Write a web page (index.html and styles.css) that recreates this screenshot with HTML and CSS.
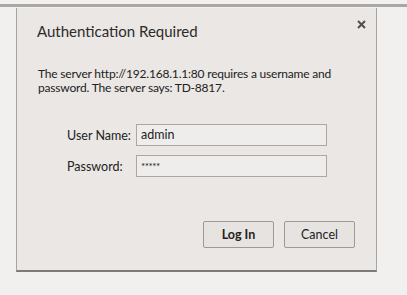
FILE: index.html
```html
<!DOCTYPE html>
<html>
<head>
  <meta charset='UTF-8'>
  <title>Authentication Required</title>
  <link rel="stylesheet" href="styles.css">
</head>
<body>
  <div class='top'></div>
  <div class='dlg'>
    <div class='hd'>
      <h1>Authentication Required</h1>
      <svg class='x' width='9' height='9' viewBox='0 0 9 9'><path d='M1 1L8 8M8 1L1 8' stroke='#505050' stroke-width='2'/></svg>
    </div>
    <p class='msg'>The server http://192.168.1.1:80 requires a username and password. The server says: TD-8817.</p>
    <div class='frm'>
      <div class='row'><label>User Name:</label><div class='in'>admin</div></div>
      <div class='row'><label>Password:</label><div class='in pw'>*****</div></div>
    </div>
    <div class='btns'>
      <button class='b pri'>Log In</button>
      <button class='b'>Cancel</button>
    </div>
  </div>
</body>
</html>
```

FILE: styles.css
```css
html,body{margin:0;height:100%;}
body{background:#f1f0ee;font-family:Lato,sans-serif;color:#222;overflow:hidden;}
.top{height:4px;border-bottom:3px solid #a9a8a6;background:#f2f1ef;}
.dlg{margin-left:16px;width:359px;height:262px;margin-top:1px;background:#eae7e4;border:1px solid #a7a5a3;border-bottom:2px solid #7d7b79;border-top:none;display:flex;flex-direction:column;}
.hd{display:flex;justify-content:space-between;align-items:flex-start;padding:13px 10px 0 20px;}
h1{margin:0;font-size:15px;line-height:20px;font-weight:normal;color:#2b2b2b;}
.x{margin-top:-1px;}
.msg{margin:26px 18px 0 21px;font-size:12px;letter-spacing:-0.2px;line-height:14px;color:#222;}
.frm{margin:29px 0 0 50px;display:flex;flex-direction:column;gap:9px;}
.row{display:flex;align-items:center;}
label{width:69px;font-size:12.5px;color:#222;}
.in{height:20px;border:1px solid #aaa7a4;background:#efedeb;font-size:12.5px;line-height:20px;padding-left:4px;width:185px;}
.pw{font-size:10px;letter-spacing:-0.5px;}
.btns{margin-top:auto;margin-bottom:22px;display:flex;justify-content:flex-end;gap:10px;padding-right:21px;}
.b{width:71px;height:27px;background:#e6e3e0;border:1px solid #9c9a98;border-radius:2px;font-family:Lato,sans-serif;font-size:12.5px;color:#222;padding:0;}
.pri{font-weight:bold;}
```
